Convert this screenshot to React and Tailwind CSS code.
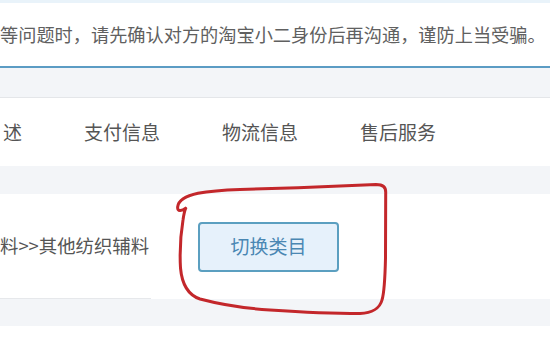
import React from "react";

const tabs = ["支付信息", "物流信息", "售后服务"];

export default function App() {
  return (
    <div className="relative w-[550px] h-[339px] overflow-hidden bg-white font-['Noto_Sans_CJK_SC','Noto_Sans',sans-serif]">
      <div className="h-[3px] bg-[#e9f3fa]" />
      <div className="h-[65px] flex items-center border-b-2 border-[#5b9cc4]">
        <span className="whitespace-nowrap text-[18.2px] text-[#606060]">
          等问题时，请先确认对方的淘宝小二身份后再沟通，谨防上当受骗。
        </span>
      </div>
      <div className="h-[30px] bg-[#f3f5f8] border-b border-[#e4e6e9]" />
      <div className="h-[68px] flex items-center">
        <div className="flex gap-[62px] whitespace-nowrap">
          <span className="text-[19px] text-[#555] w-[22px] text-right">述</span>
          {tabs.map((t) => (
            <span key={t} className="text-[19px] text-[#555]">
              {t}
            </span>
          ))}
        </div>
      </div>
      <div className="h-[28px] bg-[#f3f5f8]" />
      <div className="h-[105px] flex items-stretch">
        <div className="w-[151px] flex items-center border-b border-[#e6e8eb]">
          <span className="whitespace-nowrap text-[18.4px] text-[#555]">
            料&gt;&gt;其他纺织辅料
          </span>
        </div>
        <div className="flex items-center ml-[47px]">
          <button className="w-[141px] h-[50px] rounded-[4px] border-2 border-[#5b9fc0] bg-[#e6f1fb] text-[19px] text-[#4a87b3]">
            切换类目
          </button>
        </div>
      </div>
      <div className="h-[27px] bg-[#f3f5f8]" />
      <svg
        className="absolute inset-0 pointer-events-none"
        width="550"
        height="339"
        viewBox="0 0 550 339"
      >
        <path
          d="M185.7 208.3 C182 211, 177 212, 177.7 206.7 C178.5 201, 185 196, 198 193.3 C210 191, 225 190, 240 189.5 L298 187.7 C330 186.5, 360 185, 376 184.5 C383 184.5, 386 187, 385.7 193 L385.5 258 C385 280, 384.5 292, 382 300 C380 308, 372 313, 360 313.5 C330 313.5, 300 312, 270 310 C240 308, 215 303, 200 299 C188 295, 182 285, 180.5 268 C179.5 250, 181 232, 183 220 C184 213, 185 210, 185.7 208.3"
          fill="none"
          stroke="#c3272b"
          strokeWidth="3"
          strokeLinecap="round"
          strokeLinejoin="round"
        />
      </svg>
    </div>
  );
}
